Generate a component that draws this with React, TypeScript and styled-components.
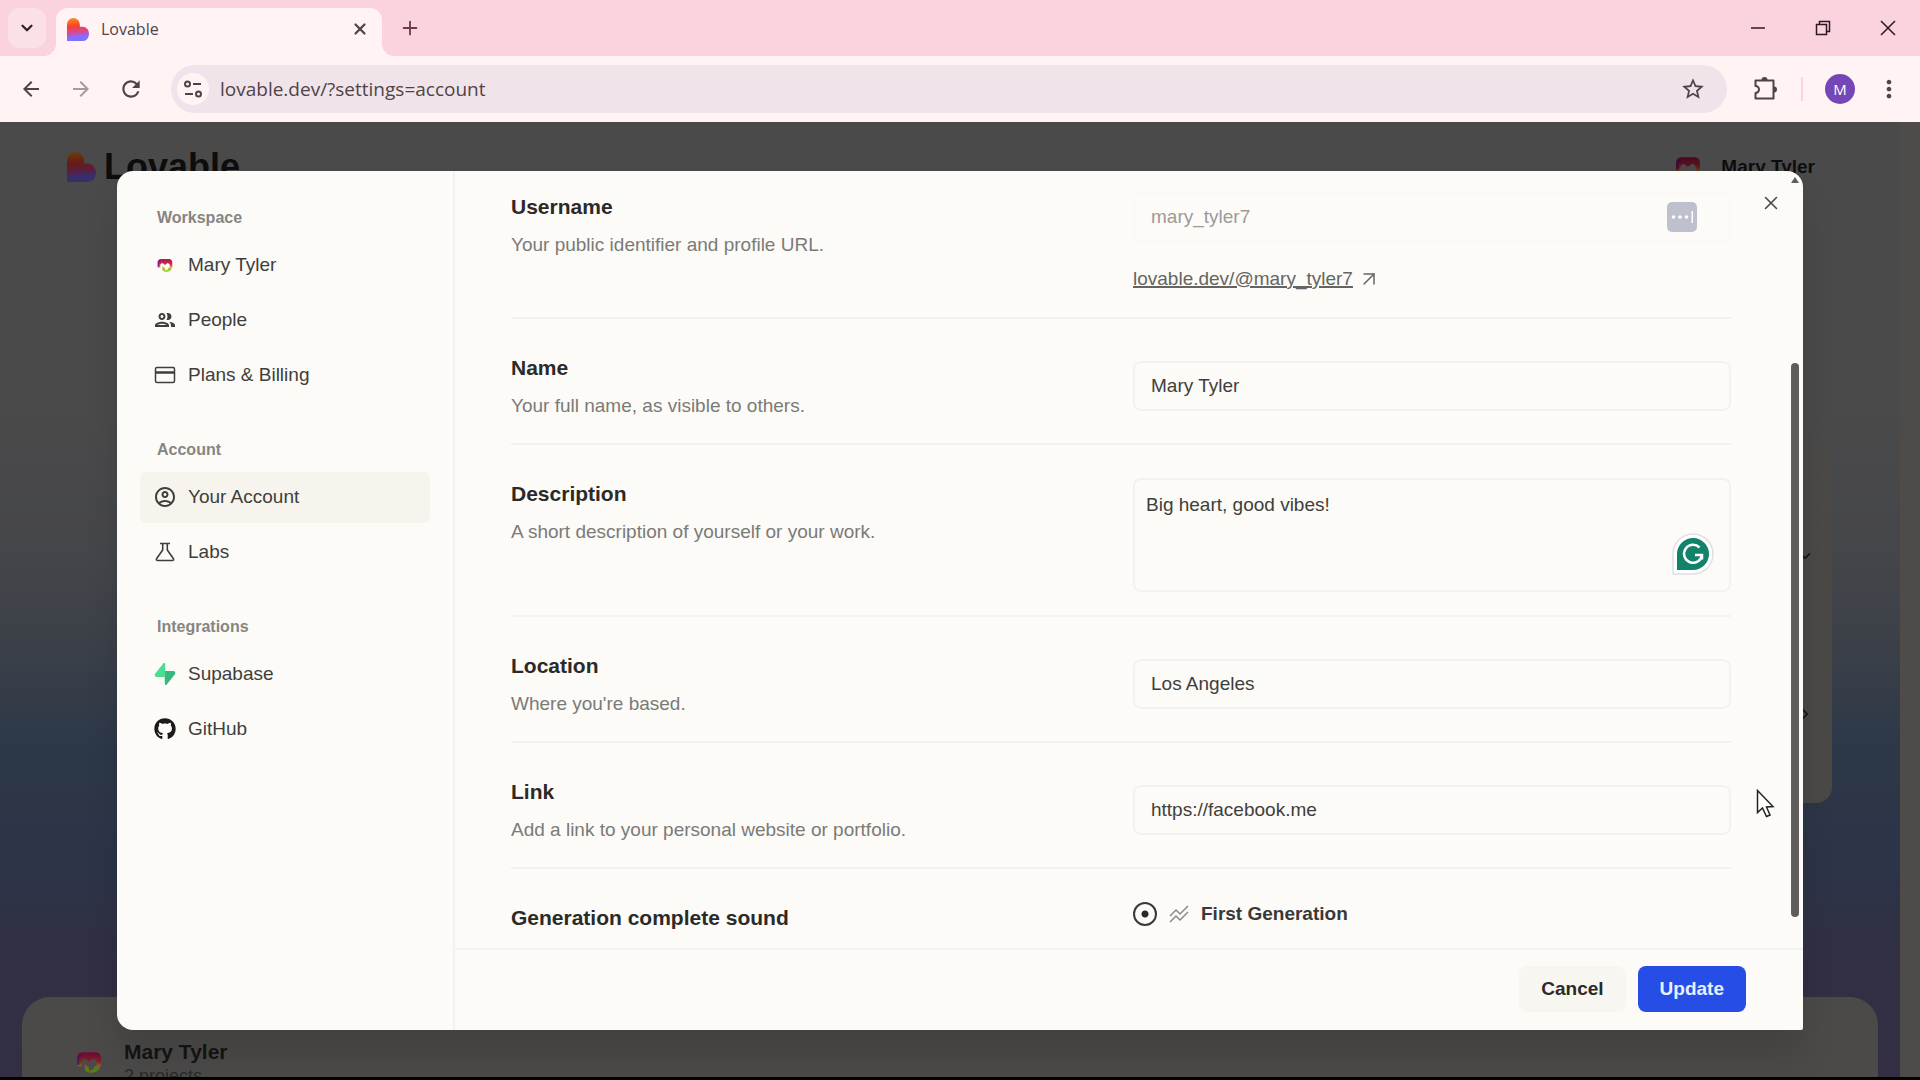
import React from "react";
import styled, { createGlobalStyle, css } from "styled-components";
import {
  MdArrowBack,
  MdArrowForward,
  MdMoreVert,
  MdOutlineAccountCircle,
  MdOutlineGroup,
  MdRefresh,
  MdStarBorder,
} from "react-icons/md";
import { FaGithub } from "react-icons/fa";
import { LuX, LuPlus, LuChevronDown, LuChevronRight, LuArrowUpRight } from "react-icons/lu";

const color = {
  strip: "#fbd3df",
  toolbar: "#fff3f4",
  omnibox: "#f0e4ea",
  chromeInk: "#4f4347",
  surface: "#fcfbf8",
  hover: "#f6f4ed",
  line: "#f3f2ef",
  ink: "#2b2a28",
  body: "#3f3e3c",
  muted: "#7b7a77",
};

const GlobalStyle = createGlobalStyle`
  * { box-sizing: border-box; }
  body { margin: 0; background: #000; }
  svg { display: block; }
  button, input, textarea { font: inherit; color: inherit; }
  button { border: 0; padding: 0; background: none; cursor: pointer; }
  h1, h2, p { margin: 0; }
`;

const Window = styled.div`
  display: flex;
  flex-direction: column;
  height: 100vh;
  overflow: hidden;
  padding-bottom: 3px;
  font-family: "Liberation Sans", Arial, sans-serif;
  font-size: 19px;
  color: ${color.ink};
`;

/* ---------- browser frame ---------- */

const TabStrip = styled.header`
  display: flex;
  align-items: flex-end;
  height: 56px;
  flex: none;
  padding-left: 8px;
  background: ${color.strip};
  font-family: "Open Sans", "Noto Sans", sans-serif;
  color: ${color.chromeInk};
`;

const TabSearch = styled.button`
  display: grid;
  place-items: center;
  width: 38px;
  height: 40px;
  margin: 0 10px 8px 0;
  border-radius: 12px;
  background: #fce0e7;
  color: #2c2225;
`;

const Tab = styled.div`
  position: relative;
  display: flex;
  align-items: center;
  gap: 12px;
  width: 326px;
  height: 48px;
  padding: 0 12px 6px 11px;
  border-radius: 12px 12px 0 0;
  background: ${color.toolbar};
  font-size: 16px;

  &::before,
  &::after {
    content: "";
    position: absolute;
    bottom: 0;
    width: 12px;
    height: 12px;
  }
  &::before {
    left: -12px;
    background: radial-gradient(circle at 0 0, transparent 12px, ${color.toolbar} 12px);
  }
  &::after {
    right: -12px;
    background: radial-gradient(circle at 100% 0, transparent 12px, ${color.toolbar} 12px);
  }
`;

const TabTitle = styled.span`
  flex: 1;
`;

const IconButton = styled.button<{ $size?: number }>`
  display: grid;
  place-items: center;
  flex: none;
  width: ${(p) => p.$size ?? 24}px;
  height: ${(p) => p.$size ?? 24}px;
  color: inherit;

  &:disabled {
    opacity: 0.5;
  }
`;

const NewTab = styled(IconButton)`
  margin: 0 auto 12px 12px;
  color: #6d3b4b;
`;

const WindowControls = styled.div`
  display: flex;
  align-items: center;
  gap: 25px;
  height: 56px;
  padding-right: 12px;
  color: #2c1a20;
`;

const Toolbar = styled.nav`
  display: flex;
  align-items: center;
  flex: none;
  height: 66px;
  padding: 0 17px 0 11px;
  background: ${color.toolbar};
  color: ${color.chromeInk};
  font-family: "Open Sans", "Noto Sans", sans-serif;
`;

const NavButtons = styled.div`
  display: flex;
  gap: 10px;
  margin-right: 20px;
`;

const Omnibox = styled.div`
  display: flex;
  align-items: center;
  flex: 1;
  height: 48px;
  padding: 0 20px 0 6px;
  border-radius: 24px;
  background: ${color.omnibox};
`;

const SiteInfo = styled.button`
  display: grid;
  place-items: center;
  width: 32px;
  height: 32px;
  margin-right: 11px;
  border-radius: 50%;
  background: ${color.toolbar};
`;

const Address = styled.input`
  flex: 1;
  border: 0;
  outline: 0;
  padding: 0;
  background: none;
  font-size: 19px;
`;

const Separator = styled.span`
  width: 2px;
  height: 24px;
  margin: 0 22px 0 20px;
  background: ${color.strip};
`;

const Profile = styled.button`
  width: 30px;
  height: 30px;
  margin-right: 20px;
  border-radius: 50%;
  background: #7446b8;
  color: #fff;
  font-size: 15px;
`;

const ToolButton = styled(IconButton)`
  margin-left: 22px;
`;

/* ---------- dimmed page ---------- */

const Viewport = styled.div`
  display: grid;
  grid-template: minmax(0, 1fr) / minmax(0, 1fr);
  flex: 1;
  min-height: 0;
  overflow: hidden;
  > * {
    grid-area: 1 / 1;
  }
`;

const Page = styled.div`
  display: grid;
  grid-template-columns: 1fr 20px;
  min-height: 0;
`;

const PageBody = styled.div`
  display: flex;
  flex-direction: column;
  min-height: 0;
  overflow: hidden;
  background: linear-gradient(
    to bottom,
    #4a4a4a 0%,
    #4a4a4a 30%,
    #45464a 45%,
    #3a3f48 56%,
    #2c3848 66%,
    #2c3447 78%,
    #322f43 88%,
    #332e44 100%
  );
`;

const PageScroll = styled.div`
  background: #4e4b49;
`;

const PageHeader = styled.div`
  display: flex;
  align-items: center;
  justify-content: space-between;
  height: 90px;
  flex: none;
  padding: 0 85px 0 67px;
  color: #0d0d0d;
`;

const Brand = styled.div`
  display: flex;
  align-items: center;
  gap: 8px;
  font-size: 36px;
  font-weight: 700;
`;

const Dimmed = styled.span`
  display: flex;
  filter: brightness(0.42);
`;

const Person = styled.div`
  display: flex;
  align-items: center;
  gap: 20px;
  font-size: 19px;
  font-weight: 700;
`;

const PromptCard = styled.div`
  display: flex;
  flex: none;
  flex-direction: column;
  align-items: flex-end;
  justify-content: flex-end;
  gap: 140px;
  height: 591px;
  margin: 0 68px 194px 600px;
  padding: 0 18px 80px 0;
  border-radius: 0 0 16px 0;
  background: linear-gradient(#4a4a4a 30%, #4a4946 60%);
  color: #111;
`;

const ProjectsCard = styled.section`
  display: flex;
  align-items: flex-start;
  gap: 22px;
  flex: none;
  height: 200px;
  margin: 0 22px;
  padding: 43px 54px;
  border-radius: 28px 28px 0 0;
  background: #4c4a48;
`;

const ProjectsText = styled.div`
  font-size: 21px;
  line-height: 24px;
  color: #141414;
`;

const ProjectCount = styled.p`
  font-size: 18px;
  color: #2a2929;
`;

const AvatarSlot = styled.div`
  display: flex;
  padding-top: 9px;
  filter: brightness(0.6);
`;

/* ---------- settings dialog ---------- */

const Overlay = styled.div`
  z-index: 1;
  display: flex;
  min-height: 0;
  padding: 49px 117px 47px;
`;

const Dialog = styled.div`
  position: relative;
  display: grid;
  grid-template-columns: 338px 1fr;
  flex: 1;
  min-height: 0;
  overflow: hidden;
  border-radius: 16px 16px 2px 16px;
  background: ${color.surface};
  box-shadow: 0 24px 32px rgba(0, 0, 0, 0.12);
`;

const Sidebar = styled.nav`
  display: flex;
  flex-direction: column;
  gap: 37px;
  padding: 35px 23px;
  border-right: 2px solid ${color.line};
`;

const Group = styled.section`
  display: flex;
  flex-direction: column;
  gap: 4px;
`;

const GroupTitle = styled.h2`
  margin: 0 17px 6px;
  font-size: 16px;
  font-weight: 700;
  line-height: 24px;
  color: #868582;
`;

const NavItem = styled.button<{ $active?: boolean }>`
  display: flex;
  align-items: center;
  gap: 11px;
  height: 51px;
  padding: 0 13px 2px;
  border-radius: 6px;
  text-align: left;
  color: ${color.body};
  ${(p) =>
    p.$active &&
    css`
      background: ${color.hover};
    `}
`;

const IconSlot = styled.span`
  display: grid;
  place-items: center;
  width: 24px;
  height: 24px;
`;

const Main = styled.form`
  display: flex;
  flex-direction: column;
  min-width: 0;
  min-height: 0;
`;

const ScrollArea = styled.div`
  display: grid;
  grid-template-columns: 1fr 16px;
  flex: 1;
  min-height: 0;
  overflow: hidden;
`;

const Fields = styled.div`
  padding: 0 56px;
  min-height: 0;
  overflow: hidden;
`;

const Track = styled.div`
  display: flex;
  flex-direction: column;
  align-items: center;
  padding-top: 6px;
  color: #5f5e5d;
`;

const Thumb = styled.div`
  width: 8px;
  height: 554px;
  margin-top: 180px;
  border-radius: 4px;
  background: currentColor;
`;

const Row = styled.div<{ $first?: boolean }>`
  display: grid;
  grid-template-columns: 1fr 1fr;
  gap: 24px;
  padding: ${(p) => (p.$first ? "20px 0 26px" : "33px 0 23px")};
  border-bottom: 2px solid ${color.line};
`;

const RowText = styled.div`
  padding: 2px 0;
`;

const RowTitle = styled.label`
  display: block;
  margin-bottom: 12px;
  font-size: 21px;
  font-weight: 700;
  line-height: 28px;
`;

const Hint = styled.p`
  line-height: 24px;
  color: ${color.muted};
`;

const Control = styled.div<{ $pad?: number }>`
  position: relative;
  min-width: 0;
  padding-top: ${(p) => p.$pad ?? 0}px;
`;

const TextField = styled.input`
  display: block;
  width: 100%;
  height: 50px;
  padding: 0 16px;
  border: 2px solid ${color.line};
  border-radius: 8px;
  outline: 0;
  background: ${color.surface};
  color: ${color.body};

  &:disabled {
    border-color: #faf9f6;
    color: #9b9a98;
  }
`;

const TextBox = styled.textarea`
  display: block;
  width: 100%;
  height: 114px;
  padding: 13px 11px;
  border: 2px solid ${color.line};
  border-radius: 8px;
  outline: 0;
  resize: none;
  background: ${color.surface};
  line-height: 24px;
  color: ${color.body};
`;

const PasswordBadge = styled.span`
  position: absolute;
  top: 11px;
  right: 34px;
  display: flex;
`;

const GrammarBadge = styled.span`
  position: absolute;
  right: 16px;
  bottom: 16px;
  display: flex;
`;

const ProfileLink = styled.a`
  display: flex;
  align-items: center;
  gap: 4px;
  width: fit-content;
  margin-top: 25px;
  line-height: 24px;
  text-decoration: none;
  color: #656462;
`;

const Underlined = styled.span`
  text-decoration: underline;
  text-decoration-thickness: 2px;
`;

const RadioLabel = styled.label`
  display: flex;
  align-items: center;
  gap: 12px;
  font-weight: 700;
  line-height: 24px;
  color: #3a3937;
`;

const Radio = styled.input`
  appearance: none;
  width: 24px;
  height: 24px;
  margin: 0;
  border: 2px solid #3a3937;
  border-radius: 50%;
  &:checked {
    background: radial-gradient(circle, #2b2a28 3px, transparent 4px);
  }
`;

const Footer = styled.footer`
  display: flex;
  justify-content: flex-end;
  align-items: flex-start;
  gap: 12px;
  flex: none;
  height: 82px;
  padding: 16px 57px 0;
  border-top: 2px solid ${color.line};
`;

const Action = styled.button<{ $primary?: boolean }>`
  height: 46px;
  padding: 0 22px;
  border-radius: 8px;
  font-weight: 700;
  background: ${(p) => (p.$primary ? "#264ee6" : "#f8f6f0")};
  color: ${(p) => (p.$primary ? "#e6f0ff" : color.ink)};
`;

const CloseButton = styled(IconButton)`
  position: absolute;
  top: 20px;
  right: 20px;
  color: #4a4948;
`;

const Cursor = styled.svg`
  position: fixed;
  left: 1756px;
  top: 789px;
  z-index: 2;
`;

/* ---------- drawings ---------- */

const Heart = ({ w, h, id }: { w: number; h: number; id: string }) => (
  <svg width={w} height={h} viewBox="0 0 24 24" preserveAspectRatio="none" aria-hidden>
    <defs>
      <linearGradient id={id} x1="0.35" y1="0" x2="0.45" y2="1">
        <stop offset="0" stopColor="#ff8a1f" />
        <stop offset="0.35" stopColor="#f4422f" />
        <stop offset="0.6" stopColor="#dd4590" />
        <stop offset="0.82" stopColor="#8a6bff" />
        <stop offset="1" stopColor="#7a73ff" />
      </linearGradient>
    </defs>
    <path
      d="M7 0c4 0 7 3.200 7 7.200v2h3c4 0 7 3.300 7 7.400S21 24 17 24H0V7.200C0 3.200 3 0 7 0z"
      fill={`url(#${id})`}
    />
  </svg>
);

const Monogram = ({ size, id }: { size: number; id: string }) => (
  <svg width={size} height={size} viewBox="0 0 24 24" fill="none" aria-hidden>
    <defs>
      <linearGradient id={id} x1="0" y1="0" x2="0" y2="24" gradientUnits="userSpaceOnUse">
        <stop offset="0.2" stopColor="#b8174f" />
        <stop offset="0.48" stopColor="#d8344f" />
        <stop offset="0.65" stopColor="#e8a23a" />
        <stop offset="0.8" stopColor="#8fd12a" />
      </linearGradient>
    </defs>
    <path d="M6 3h12c3 0 5 2 5 5v8h-4v-5l-3-2-4 3-4-3-3 2v5H1V8c0-3 2-5 5-5z" fill={`url(#${id})`} />
    <path d="M8 14l4 3v3l4-1 1-3h5c0 4-4 6-8 6-3 0-5-1-6-3z" fill={`url(#${id})`} />
    <path d="M2 15V8l3-3" stroke="#6a1b9a" strokeWidth="2" opacity="0.7" />
  </svg>
);

const SupabaseMark = () => (
  <svg width="22" height="22" viewBox="0 0 24 24" aria-hidden>
    <path d="M13.700 23.600c-.6.800-1.900.4-1.900-.6L11.600 8.800h9.600c1.700 0 2.700 2 1.600 3.400z" fill="#36b87c" />
    <path d="M10.300.4c.6-.8 1.900-.4 1.900.6l.1 14.200H2.800c-1.700 0-2.700-2-1.600-3.400z" fill="#4ade91" />
  </svg>
);

const Card = () => (
  <svg width="22" height="22" viewBox="0 0 22 22" fill="none" stroke="currentColor" strokeWidth="1.500" aria-hidden>
    <rect x="1.500" y="3.500" width="19" height="15" rx="1.500" />
    <path d="M1.500 8.500h19" strokeWidth="2.500" />
  </svg>
);

const Flask = () => (
  <svg width="22" height="22" viewBox="0 0 22 22" fill="none" stroke="currentColor" strokeWidth="1.600" aria-hidden>
    <path d="M6 2.500h10M8.700 2.500V9l-6 8.500c-.7 1-.2 2 1 2h14.600c1.200 0 1.700-1 1-2l-6-8.500V2.500" />
  </svg>
);

const Tune = () => (
  <svg width="20" height="20" viewBox="0 0 20 20" fill="none" stroke="currentColor" strokeWidth="2" aria-hidden>
    <circle cx="4.500" cy="5" r="2.500" />
    <path d="M10 5h8M2 15h8" />
    <circle cx="15.500" cy="15" r="2.500" />
  </svg>
);

const Puzzle = () => (
  <svg width="26" height="26" viewBox="0 0 26 26" fill="none" stroke="currentColor" strokeWidth="2" aria-hidden>
    <path d="M3.500 4.500h18v18h-18v-5.500a3.300 3.300 0 0 0 0-7z" strokeLinejoin="round" />
    <path d="M9.500 4a3 3 0 0 1 6 0zM22 10.500a3 3 0 0 1 0 6z" fill="currentColor" stroke="none" />
  </svg>
);

const Minimise = () => (
  <svg width="16" height="16" viewBox="0 0 16 16" stroke="currentColor" strokeWidth="1.500" aria-hidden>
    <path d="M1 8h14" />
  </svg>
);

const Restore = () => (
  <svg width="16" height="16" viewBox="0 0 16 16" fill="none" stroke="currentColor" strokeWidth="1.500" aria-hidden>
    <path d="M1.500 4.500h10v10h-10zM4.500 4.500v-3h10v10h-3" />
  </svg>
);

const CloseWindow = () => (
  <svg width="16" height="16" viewBox="0 0 16 16" stroke="currentColor" strokeWidth="1.500" aria-hidden>
    <path d="M1 1l14 14M15 1L1 15" />
  </svg>
);

const Zigzag = () => (
  <svg width="20" height="20" viewBox="0 0 20 20" fill="none" stroke="#8a8987" strokeWidth="1.500" aria-hidden>
    <path d="M1 12l6-6 4 4 8-8M1 18l6-6 4 4 8-8" />
  </svg>
);

const PasswordDots = () => (
  <svg width="30" height="30" viewBox="0 0 30 30" aria-hidden>
    <rect width="30" height="30" rx="5" fill="#bfc0ce" />
    <g fill="#fff">
      <circle cx="6.500" cy="15" r="1.800" />
      <circle cx="13" cy="15" r="1.800" />
      <circle cx="19.500" cy="15" r="1.800" />
      <rect x="24.500" y="9" width="1.500" height="12" />
    </g>
  </svg>
);

const GrammarMark = () => (
  <svg width="44" height="44" viewBox="0 0 44 44" fill="none" aria-hidden>
    <path d="M2 42V22a20 20 0 1 1 20 20z" fill="#fff" stroke="#dfe0e4" strokeWidth="1.500" />
    <path d="M6 38V22a16 16 0 1 1 16 16z" fill="#12826a" />
    <path d="M28.500 15.500A9 9 0 1 0 31 23h-7M31 22.500v5" stroke="#fff" strokeWidth="2.500" />
  </svg>
);

type Item = { label: string; icon: React.ReactNode; active?: boolean };

const workspaceItems: Item[] = [
  { label: "Mary Tyler", icon: <Monogram size={16} id="mono-nav" /> },
  { label: "People", icon: <MdOutlineGroup size={24} /> },
  { label: "Plans & Billing", icon: <Card /> },
];
const accountItems: Item[] = [
  { label: "Your Account", icon: <MdOutlineAccountCircle size={24} />, active: true },
  { label: "Labs", icon: <Flask /> },
];
const integrationItems: Item[] = [
  { label: "Supabase", icon: <SupabaseMark /> },
  { label: "GitHub", icon: <FaGithub size={22} color="#1c1b1a" /> },
];

const NavGroup = ({ title, items }: { title: string; items: Item[] }) => (
  <Group>
    <GroupTitle>{title}</GroupTitle>
    {items.map((i) => (
      <NavItem key={i.label} type="button" $active={i.active}>
        <IconSlot>{i.icon}</IconSlot>
        {i.label}
      </NavItem>
    ))}
  </Group>
);

export default function App() {
  return (
    <Window>
      <GlobalStyle />
      <TabStrip>
        <TabSearch aria-label="Search tabs">
          <LuChevronDown size={18} strokeWidth={3} />
        </TabSearch>
        <Tab>
          <Heart w={22} h={23} id="heart-tab" />
          <TabTitle>Lovable</TabTitle>
          <IconButton $size={20} aria-label="Close tab">
            <LuX size={18} strokeWidth={3} />
          </IconButton>
        </Tab>
        <NewTab $size={32} aria-label="New tab">
          <LuPlus size={22} strokeWidth={2} />
        </NewTab>
        <WindowControls>
          <IconButton $size={40} aria-label="Minimise"><Minimise /></IconButton>
          <IconButton $size={40} aria-label="Restore"><Restore /></IconButton>
          <IconButton $size={40} aria-label="Close window"><CloseWindow /></IconButton>
        </WindowControls>
      </TabStrip>
      <Toolbar>
        <NavButtons>
          <IconButton $size={40} aria-label="Back"><MdArrowBack size={24} /></IconButton>
          <IconButton $size={40} aria-label="Forward" disabled><MdArrowForward size={24} /></IconButton>
          <IconButton $size={40} aria-label="Reload"><MdRefresh size={26} /></IconButton>
        </NavButtons>
        <Omnibox>
          <SiteInfo aria-label="Site information"><Tune /></SiteInfo>
          <Address aria-label="Address" defaultValue="lovable.dev/?settings=account" />
          <IconButton $size={28} aria-label="Bookmark"><MdStarBorder size={26} /></IconButton>
        </Omnibox>
        <ToolButton $size={32} aria-label="Extensions"><Puzzle /></ToolButton>
        <Separator />
        <Profile aria-label="Profile">M</Profile>
        <IconButton $size={28} aria-label="Menu"><MdMoreVert size={28} /></IconButton>
      </Toolbar>

      <Viewport>
        <Page>
          <PageBody>
            <PageHeader>
              <Brand>
                <Dimmed><Heart w={29} h={30} id="heart-page" /></Dimmed>
                Lovable
              </Brand>
              <Person>
                <Dimmed><Monogram size={26} id="mono-head" /></Dimmed>
                Mary Tyler
              </Person>
            </PageHeader>
            <PromptCard>
              <LuChevronDown size={18} />
              <LuChevronRight size={18} />
            </PromptCard>
            <ProjectsCard>
              <AvatarSlot><Monogram size={26} id="mono-card" /></AvatarSlot>
              <ProjectsText>
                <strong>Mary Tyler</strong>
                <ProjectCount>2 projects</ProjectCount>
              </ProjectsText>
            </ProjectsCard>
          </PageBody>
          <PageScroll />
        </Page>

        <Overlay>
          <Dialog role="dialog" aria-label="Settings">
            <Sidebar>
              <NavGroup title="Workspace" items={workspaceItems} />
              <NavGroup title="Account" items={accountItems} />
              <NavGroup title="Integrations" items={integrationItems} />
            </Sidebar>
            <Main onSubmit={(e) => e.preventDefault()}>
              <ScrollArea>
                <Fields>
                  <Row $first>
                    <RowText>
                      <RowTitle htmlFor="username">Username</RowTitle>
                      <Hint>Your public identifier and profile URL.</Hint>
                    </RowText>
                    <Control $pad={1}>
                      <TextField id="username" defaultValue="mary_tyler7" disabled />
                      <PasswordBadge><PasswordDots /></PasswordBadge>
                      <ProfileLink href="#profile">
                        <Underlined>lovable.dev/@mary_tyler7</Underlined>
                        <LuArrowUpRight size={24} strokeWidth={1.5} />
                      </ProfileLink>
                    </Control>
                  </Row>
                  <Row>
                    <RowText>
                      <RowTitle htmlFor="name">Name</RowTitle>
                      <Hint>Your full name, as visible to others.</Hint>
                    </RowText>
                    <Control $pad={9}>
                      <TextField id="name" defaultValue="Mary Tyler" />
                    </Control>
                  </Row>
                  <Row>
                    <RowText>
                      <RowTitle htmlFor="description">Description</RowTitle>
                      <Hint>A short description of yourself or your work.</Hint>
                    </RowText>
                    <Control>
                      <TextBox id="description" defaultValue="Big heart, good vibes!" />
                      <GrammarBadge><GrammarMark /></GrammarBadge>
                    </Control>
                  </Row>
                  <Row>
                    <RowText>
                      <RowTitle htmlFor="location">Location</RowTitle>
                      <Hint>Where you're based.</Hint>
                    </RowText>
                    <Control $pad={9}>
                      <TextField id="location" defaultValue="Los Angeles" />
                    </Control>
                  </Row>
                  <Row>
                    <RowText>
                      <RowTitle htmlFor="link">Link</RowTitle>
                      <Hint>Add a link to your personal website or portfolio.</Hint>
                    </RowText>
                    <Control $pad={9}>
                      <TextField id="link" defaultValue="https://facebook.me" />
                    </Control>
                  </Row>
                  <Row>
                    <RowText>
                      <RowTitle as="h2">Generation complete sound</RowTitle>
                    </RowText>
                    <Control>
                      <RadioLabel>
                        <Radio type="radio" name="sound" defaultChecked />
                        <Zigzag />
                        First Generation
                      </RadioLabel>
                    </Control>
                  </Row>
                </Fields>
                <Track>
                  <svg width="8" height="6" viewBox="0 0 8 6" aria-hidden>
                    <path d="M4 0l4 6H0z" fill="currentColor" />
                  </svg>
                  <Thumb />
                </Track>
              </ScrollArea>
              <Footer>
                <Action type="button">Cancel</Action>
                <Action type="submit" $primary>Update</Action>
              </Footer>
            </Main>
            <CloseButton type="button" aria-label="Close settings">
              <LuX size={22} strokeWidth={1.75} />
            </CloseButton>
          </Dialog>
        </Overlay>
      </Viewport>
      <Cursor width="20" height="30" viewBox="0 0 20 30" aria-hidden>
        <path d="M1.500 1.500v22l5-4.500 4 8.500 3.500-1.500-3.500-8 6.500-.5z" fill="#fff" stroke="#222" strokeWidth="1.500" />
      </Cursor>
    </Window>
  );
}
